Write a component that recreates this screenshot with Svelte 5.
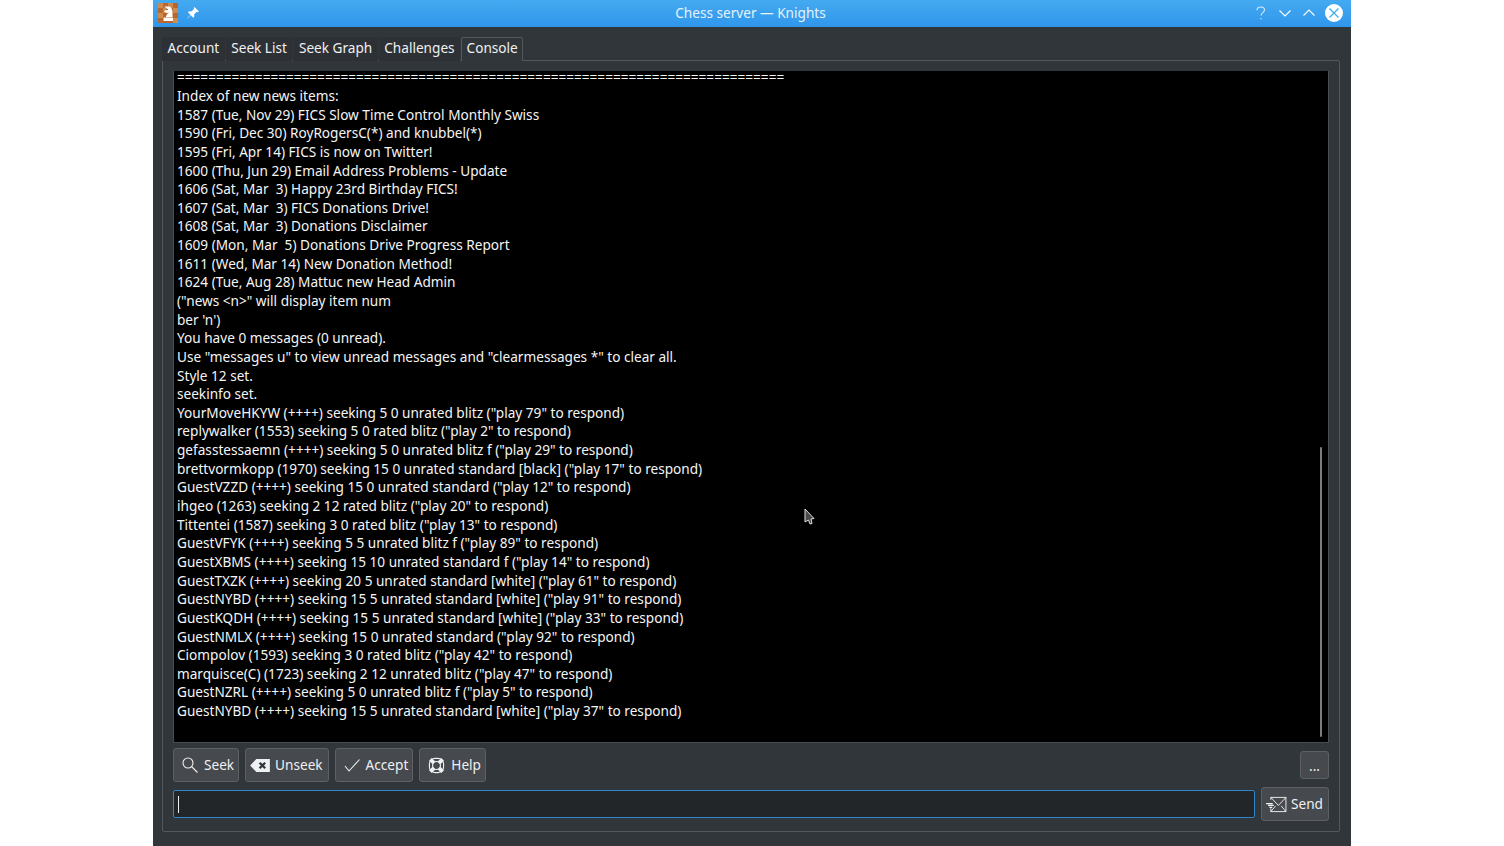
<script>
	const lines = [
		'==============================================================================',
		'Index of new news items:',
		'1587 (Tue, Nov 29) FICS Slow Time Control Monthly Swiss',
		'1590 (Fri, Dec 30) RoyRogersC(*) and knubbel(*)',
		'1595 (Fri, Apr 14) FICS is now on Twitter!',
		'1600 (Thu, Jun 29) Email Address Problems - Update',
		'1606 (Sat, Mar  3) Happy 23rd Birthday FICS!',
		'1607 (Sat, Mar  3) FICS Donations Drive!',
		'1608 (Sat, Mar  3) Donations Disclaimer',
		'1609 (Mon, Mar  5) Donations Drive Progress Report',
		'1611 (Wed, Mar 14) New Donation Method!',
		'1624 (Tue, Aug 28) Mattuc new Head Admin',
		'("news <n>" will display item num',
		"ber 'n')",
		'You have 0 messages (0 unread).',
		'Use "messages u" to view unread messages and "clearmessages *" to clear all.',
		'Style 12 set.',
		'seekinfo set.',
		'YourMoveHKYW (++++) seeking 5 0 unrated blitz ("play 79" to respond)',
		'replywalker (1553) seeking 5 0 rated blitz ("play 2" to respond)',
		'gefasstessaemn (++++) seeking 5 0 unrated blitz f ("play 29" to respond)',
		'brettvormkopp (1970) seeking 15 0 unrated standard [black] ("play 17" to respond)',
		'GuestVZZD (++++) seeking 15 0 unrated standard ("play 12" to respond)',
		'ihgeo (1263) seeking 2 12 rated blitz ("play 20" to respond)',
		'Tittentei (1587) seeking 3 0 rated blitz ("play 13" to respond)',
		'GuestVFYK (++++) seeking 5 5 unrated blitz f ("play 89" to respond)',
		'GuestXBMS (++++) seeking 15 10 unrated standard f ("play 14" to respond)',
		'GuestTXZK (++++) seeking 20 5 unrated standard [white] ("play 61" to respond)',
		'GuestNYBD (++++) seeking 15 5 unrated standard [white] ("play 91" to respond)',
		'GuestKQDH (++++) seeking 15 5 unrated standard [white] ("play 33" to respond)',
		'GuestNMLX (++++) seeking 15 0 unrated standard ("play 92" to respond)',
		'Ciompolov (1593) seeking 3 0 rated blitz ("play 42" to respond)',
		'marquisce(C) (1723) seeking 2 12 unrated blitz ("play 47" to respond)',
		'GuestNZRL (++++) seeking 5 0 unrated blitz f ("play 5" to respond)',
		'GuestNYBD (++++) seeking 15 5 unrated standard [white] ("play 37" to respond)'
	];
	const tabs = ['Account', 'Seek List', 'Seek Graph', 'Challenges', 'Console'];
</script>

<div class="page">
	<div class="window">
		<header class="titlebar">
			<div class="title-left">
				<svg class="app-icon" width="20" height="20" viewBox="0 0 20 20">
					<rect width="20" height="20" fill="#b9662c" />
					<rect x="0" y="0" width="5" height="5" fill="#cf8a4e" />
					<rect x="10" y="0" width="5" height="5" fill="#cf8a4e" />
					<rect x="5" y="5" width="5" height="5" fill="#cf8a4e" />
					<rect x="15" y="5" width="5" height="5" fill="#cf8a4e" />
					<rect x="0" y="10" width="5" height="5" fill="#cf8a4e" />
					<rect x="15" y="15" width="5" height="5" fill="#cf8a4e" />
					<path d="M6 3.500h5.500c2 1 3 3 3 6v4.500H8c0-2 1.500-3 3-4.500-1.500.5-2.500.5-3.500 0L6 8.500 9 5.500z" fill="#fff" />
					<path d="M5.500 14.500h9.500v3.500H5.500z" fill="#fff" />
					<circle cx="9" cy="6.500" r=".8" fill="#6b3a18" />
				</svg>
				<svg class="pin" width="14" height="14" viewBox="0 0 14 14">
					<path d="M8.500 1 13 5.500l-1.300.7-1-.4-2.600 2.700.2 2.300-1 1L4.800 9.300 1.500 12.500l-.2-.2 3.200-3.400L2 6.300l1-1 2.300.2L8 2.900l-.2-1z" fill="#fff" />
				</svg>
			</div>
			<span class="title-text">Chess server — Knights</span>
			<div class="title-right">
				<svg width="16" height="16" viewBox="0 0 16 16" fill="none" stroke="#d6ecfb" stroke-width="1.100">
					<path d="M4 5.200C4 3 5.800 2 7.800 2c2.100 0 3.700 1.200 3.700 3 0 2.600-3.500 2.600-3.500 5.500" />
					<path d="M8 13v1.300" />
				</svg>
				<svg width="16" height="16" viewBox="0 0 16 16" fill="none" stroke="#fff" stroke-width="1.100">
					<path d="M2.500 5.500 8 11l5.500-5.500" />
				</svg>
				<svg width="16" height="16" viewBox="0 0 16 16" fill="none" stroke="#fff" stroke-width="1.100">
					<path d="M2.500 10.500 8 5l5.500 5.500" />
				</svg>
				<svg width="18" height="18" viewBox="0 0 18 18">
					<circle cx="9" cy="9" r="9" fill="#fff" />
					<path d="M4.500 4.500l9 9M13.500 4.500l-9 9" stroke="#3daee9" stroke-width="1.300" />
				</svg>
			</div>
		</header>

		<div class="body">
			<nav class="tabs">
				{#each tabs as tab, i}
					<div class="tab" class:active={i === 4}>{tab}</div>
				{/each}
			</nav>

			<section class="pane">
				<div class="console">
					<div class="console-text">
						{#each lines as line}
							<div class="line">{line}</div>
						{/each}
					</div>
					<div class="scrollbar"></div>
					<svg class="cursor" width="12" height="18" viewBox="0 0 12 18">
						<path d="M1 1l9 9.500-3 .5 1 4.500-2 .5-1.500-4L1 14z" fill="#4a4a4a" stroke="#ddd" stroke-width="1" />
					</svg>
				</div>

				<div class="actions">
					<button class="btn">
						<svg width="16" height="16" viewBox="0 0 16 16" fill="none" stroke="#eff0f1" stroke-width="1.100">
							<circle cx="6" cy="6" r="5" />
							<path d="M9.500 9.500l6 6" />
						</svg>
						<span>Seek</span>
					</button>
					<button class="btn wide">
						<svg width="21" height="15" viewBox="0 0 22 16">
							<path d="M6.500 1H21v14H6.500L0 8z" fill="#eff0f1" />
							<path d="M10 5l6 6M16 5l-6 6" stroke="#31363b" stroke-width="2.400" />
						</svg>
						<span>Unseek</span>
					</button>
					<button class="btn">
						<svg width="16" height="16" viewBox="0 0 16 16" fill="none" stroke="#eff0f1" stroke-width="1.100">
							<path d="M1 9l4 5L15.500 2.500" />
						</svg>
						<span>Accept</span>
					</button>
					<button class="btn">
						<svg width="17" height="17" viewBox="0 0 18 18" fill="none" stroke="#eff0f1">
							<rect x="1.500" y="1.500" width="15" height="15" rx="6" stroke-width="1.200" />
							<circle cx="9" cy="9" r="4.200" stroke-width="1.200" />
							<path d="M2.500 2.500l3.800 3.800M15.500 2.500l-3.800 3.800M2.500 15.500l3.800-3.800M15.500 15.500l-3.800-3.800" stroke-width="4" />
						</svg>
						<span>Help</span>
					</button>
					<button class="btn more">...</button>
				</div>

				<div class="send-row">
					<div class="input"><span class="caret"></span></div>
					<button class="btn wide">
						<svg width="21" height="17" viewBox="0 0 22 18" fill="none" stroke="#eff0f1" stroke-width="1">
							<path d="M5 4V1.500H21V16.500H5V13" />
							<path d="M5 1.500l8 8.500 8-8.500M5 16.500l5-6M21 16.500l-5-6" />
							<path d="M0 8h7M2 10h6M3.500 12h3" stroke-width="1.400" />
						</svg>
						<span>Send</span>
					</button>
				</div>
			</section>
		</div>
	</div>
</div>

<style>
	:global(body) {
		background: #fff;
	}

	.page {
		display: flex;
		justify-content: center;
		height: 846px;
		overflow: hidden;
		font-family: 'Noto Sans', sans-serif;
		font-size: 13.62px;
		color: #eff0f1;
	}

	.window {
		display: flex;
		flex-direction: column;
		width: 1198px;
		background: #31363b;
	}

	.titlebar {
		display: flex;
		align-items: center;
		justify-content: space-between;
		box-sizing: border-box;
		height: 27px;
		padding: 0 8px 1px 5px;
		background: linear-gradient(#44aaf0, #3096ec);
	}

	.title-left,
	.title-right {
		display: flex;
		align-items: center;
	}

	.title-left {
		gap: 8px;
		width: 200px;
	}

	.title-right {
		gap: 8px;
		width: 200px;
		justify-content: flex-end;
	}

	.app-icon {
		display: block;
	}

	.title-text {
		color: #e4f2fc;
		padding-bottom: 2px;
	}

	.body {
		display: flex;
		flex-direction: column;
		flex: 1;
		padding: 10px 11px 14px 9px;
		min-height: 0;
	}

	.tabs {
		display: flex;
		height: 24px;
		position: relative;
		z-index: 1;
		margin-bottom: -1px;
	}

	.tab {
		display: flex;
		align-items: center;
		box-sizing: border-box;
		padding: 0 4.500px 4px 4.500px;
		height: 24px;
		background: #2d3136;
		border: 1px solid transparent;
		border-bottom: 0;
		margin-right: 1px;
		white-space: pre;
	}

	.tab.active {
		background: #31363b;
		border-color: #54585d;
		border-radius: 2px 2px 0 0;
	}

	.pane {
		display: flex;
		flex-direction: column;
		flex: 1;
		box-sizing: border-box;
		border: 1px solid #54585d;
		border-radius: 2px;
		padding: 10px 10px 13px 10px;
		min-height: 0;
	}

	.console {
		position: relative;
		box-sizing: border-box;
		height: 672px;
		background: #000;
		border: 1px solid #4a4e52;
		border-width: 0 1px 1px 1px;
		overflow: hidden;
		flex: none;
	}

	.console-text {
		padding-left: 3px;
		color: #f5f5f5;
	}

	.line {
		height: 18.650px;
		line-height: 18.650px;
		white-space: pre;
	}

	/* top of the scrollback is cut by the viewport */
	.line:first-child {
		height: 15.950px;
		line-height: 12px;
	}

	.scrollbar {
		position: absolute;
		right: 6px;
		top: 376px;
		bottom: 5px;
		width: 2px;
		background: #7b7e81;
		border-radius: 1px;
	}

	.cursor {
		position: absolute;
		left: 630px;
		top: 437px;
	}

	.actions {
		display: flex;
		gap: 6px;
		margin-top: 5px;
		align-items: center;
	}

	.btn {
		display: flex;
		align-items: center;
		gap: 6px;
		box-sizing: border-box;
		height: 34px;
		padding: 0 4px 0 8px;
		background: #46494d;
		border: 1px solid #5d6064;
		border-radius: 3px;
		color: #eff0f1;
		font: inherit;
	}

	.btn span {
		padding-bottom: 2px;
	}

	.btn.wide {
		gap: 4px;
		padding: 0 5px 0 4px;
	}

	.btn.more {
		margin-left: auto;
		width: 29px;
		height: 28px;
		justify-content: center;
		padding: 0;
	}

	.send-row {
		display: flex;
		align-items: center;
		gap: 6px;
		margin-top: 5px;
	}

	.input {
		flex: 1;
		display: flex;
		align-items: center;
		box-sizing: border-box;
		height: 28px;
		padding-left: 4px;
		background: #232629;
		border: 1px solid #2f86c9;
		border-radius: 2px;
	}

	.caret {
		width: 1px;
		height: 17px;
		background: #eff0f1;
	}
</style>
